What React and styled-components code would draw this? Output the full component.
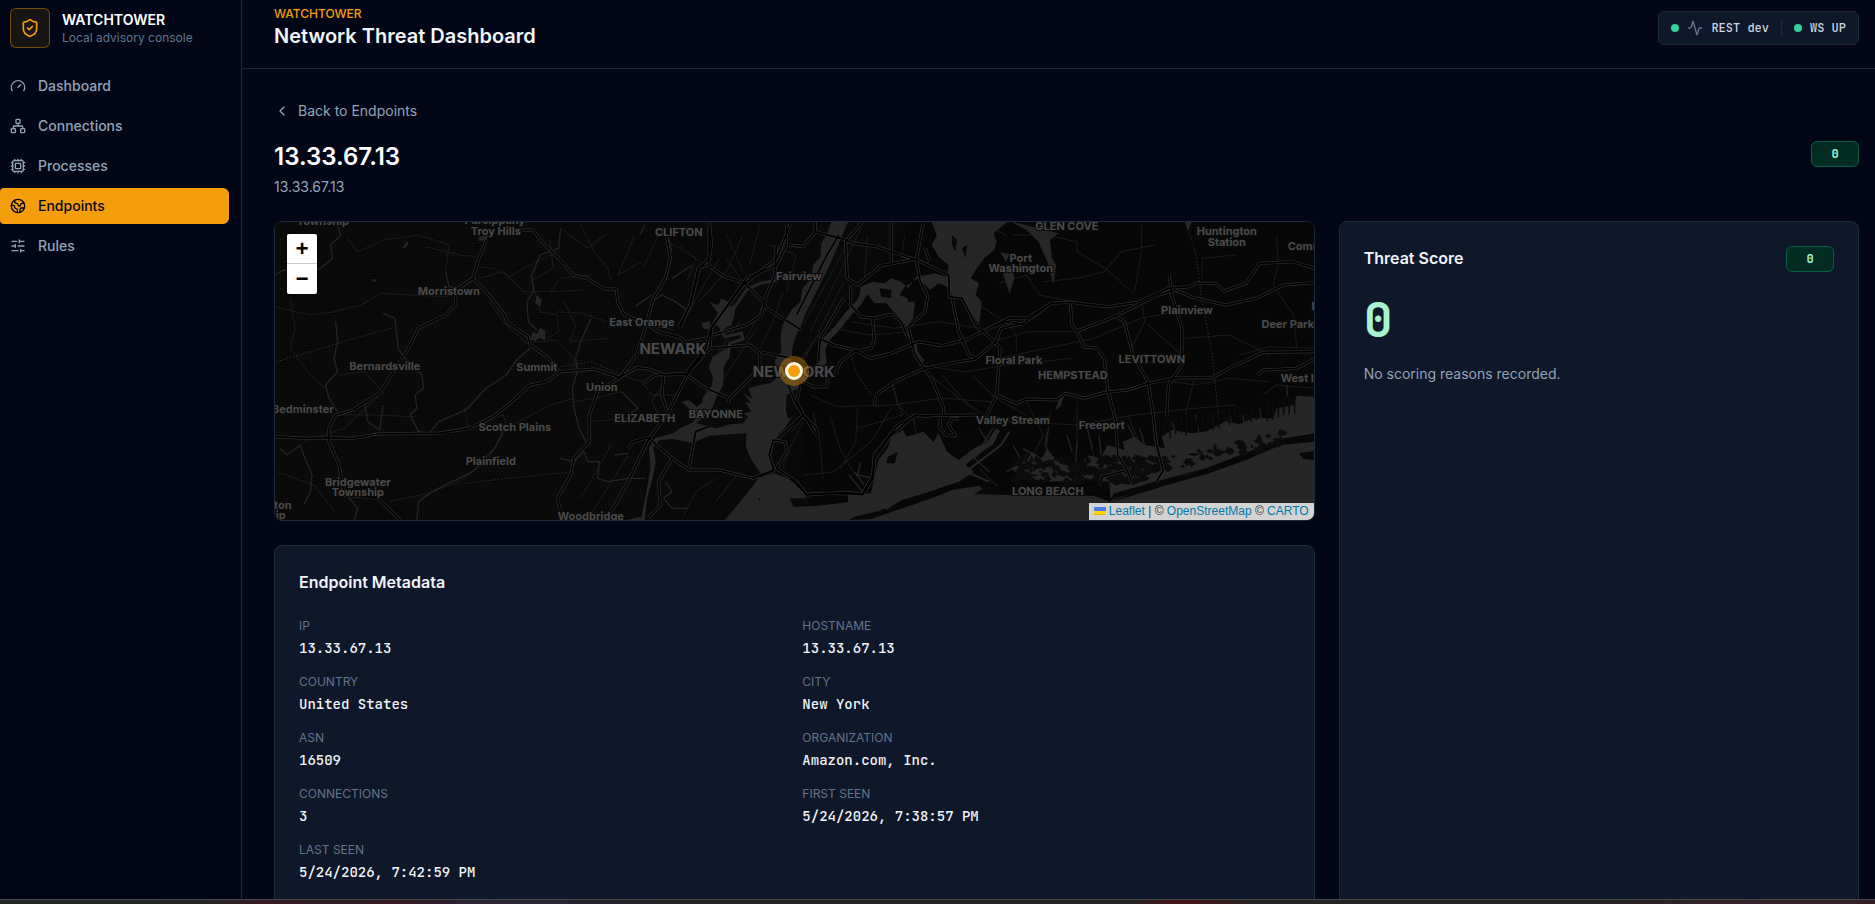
import React from 'react';
import styled, {createGlobalStyle} from 'styled-components';
import {
    Activity,
    ChevronLeft,
    Cpu,
    Earth,
    Gauge,
    Network,
    ShieldCheck,
    SlidersHorizontal,
} from 'lucide-react';

const sans = '"Inter", "Liberation Sans", sans-serif';
const mono = '"JetBrains Mono", "DejaVu Sans Mono", monospace';

const GlobalStyle = createGlobalStyle`
    * {
        box-sizing: border-box;
    }

    body {
        margin: 0;
        background: #020617;
        color: #f1f5f9;
        font-family: ${sans};
        font-size: 14px;
        line-height: 20px;
    }

    h1, h2, p, dl, dd, ul {
        margin: 0;
        padding: 0;
    }

    a {
        color: inherit;
        text-decoration: none;
    }
`;

const Shell = styled.div`
    display: flex;
    height: 100vh;
    overflow: hidden;
`;

const Sidebar = styled.aside`
    width: 242px;
    flex-shrink: 0;
    padding: 8px 12px 0 0;
    border-right: 1px solid #1e293b;
`;

const Brand = styled.div`
    display: flex;
    align-items: center;
    gap: 12px;
    padding-left: 10px;
`;

const BrandMark = styled.div`
    display: flex;
    align-items: center;
    justify-content: center;
    width: 40px;
    height: 40px;
    border: 1px solid rgba(245, 158, 11, 0.4);
    border-radius: 6px;
    background: rgba(245, 158, 11, 0.1);
    color: #f59e0b;
`;

const BrandName = styled.p`
    font-weight: 600;
    line-height: 20px;
    color: #fff;
`;

const BrandNote = styled.p`
    font-size: 12px;
    line-height: 16px;
    color: #64748b;
`;

const NavList = styled.ul`
    display: grid;
    gap: 4px;
    margin-top: 20px;
    list-style: none;
`;

const NavLink = styled.a`
    display: flex;
    align-items: center;
    gap: 12px;
    height: 36px;
    padding-left: 10px;
    border-radius: 4px 6px 6px 4px;
    font-weight: 500;
    background: ${(props) => (props.$active ? '#f59e0b' : 'transparent')};
    color: ${(props) => (props.$active ? '#020617' : '#94a3b8')};
`;

const Page = styled.div`
    flex: 1;
    min-width: 0;
`;

const TopBar = styled.header`
    display: flex;
    align-items: center;
    justify-content: space-between;
    padding: 6px 16px 18px 32px;
    border-bottom: 1px solid #1e293b;
`;

const Eyebrow = styled.p`
    font-size: 12px;
    line-height: 16px;
    font-weight: 500;
    color: #f59e0b;
`;

const AppTitle = styled.p`
    font-size: 20px;
    line-height: 28px;
    font-weight: 600;
    color: #f1f5f9;
`;

const StatusPill = styled.div`
    display: flex;
    align-items: center;
    gap: 8px;
    padding: 8px 12px;
    border: 1px solid #1e293b;
    border-radius: 6px;
    background: #0f172a;
    color: #cbd5e1;
    font-family: ${mono};
    font-size: 12px;
    font-weight: 500;
    line-height: 16px;

    svg {
        color: #64748b;
    }
`;

const Dot = styled.span`
    width: 8px;
    height: 8px;
    border-radius: 50%;
    background: #34d399;
`;

const Divider = styled.span`
    width: 1px;
    height: 16px;
    margin: 0 4px;
    background: #1e293b;
`;

const Main = styled.main`
    display: grid;
    gap: 20px;
    padding: 32px 16px 32px 32px;
`;

const BackLink = styled.a`
    display: flex;
    align-items: center;
    gap: 8px;
    justify-self: start;
    color: #94a3b8;
`;

const EndpointHead = styled.div`
    display: flex;
    align-items: flex-start;
    justify-content: space-between;
    margin-bottom: 4px;
`;

const EndpointTitle = styled.h1`
    margin-bottom: 4px;
    font-size: 24px;
    line-height: 32px;
    font-weight: 600;
    color: #fff;
`;

const Muted = styled.p`
    color: #94a3b8;
`;

const Badge = styled.span`
    display: inline-flex;
    align-items: center;
    justify-content: center;
    min-width: 48px;
    height: 26px;
    border: 1px solid #065f46;
    border-radius: 6px;
    background: #022c22;
    color: #a7f3d0;
    font-family: ${mono};
    font-size: 12px;
    font-weight: 600;
`;

const Columns = styled.div`
    display: grid;
    grid-template-columns: minmax(0, 2fr) minmax(0, 1fr);
    gap: 24px;
`;

const Stack = styled.div`
    display: grid;
    gap: 24px;
`;

const Card = styled.section`
    padding: 24px;
    border: 1px solid #1e293b;
    border-radius: 8px;
    background: #0f172a;
`;

const CardHead = styled.div`
    display: flex;
    align-items: flex-start;
    justify-content: space-between;
    margin-bottom: 24px;
`;

const CardTitle = styled.h2`
    font-size: 16px;
    line-height: 24px;
    font-weight: 600;
    color: #f1f5f9;
`;

const Score = styled.p`
    margin-bottom: 20px;
    font-family: ${mono};
    font-size: 48px;
    line-height: 48px;
    font-weight: 600;
    color: #a7f3d0;
`;

const MetaGrid = styled.dl`
    display: grid;
    grid-template-columns: 1fr 1fr;
    gap: 16px;
`;

const MetaLabel = styled.dt`
    margin-bottom: 4px;
    font-size: 12px;
    line-height: 16px;
    text-transform: uppercase;
    color: #64748b;
`;

const MetaValue = styled.dd`
    font-family: ${mono};
    font-size: 14px;
    font-weight: 500;
    line-height: 20px;
    color: #f1f5f9;
`;

const MapFrame = styled.section`
    position: relative;
    height: 300px;
    border: 1px solid #1e293b;
    border-radius: 8px;
    overflow: hidden;
    background: #090909;
`;

const MapCanvas = styled.svg`
    display: block;
    width: 100%;
    height: 100%;
`;

const ZoomControl = styled.div`
    position: absolute;
    top: 10px;
    left: 10px;
    border: 2px solid rgba(0, 0, 0, 0.2);
    border-radius: 4px;
    background-clip: padding-box;
`;

const ZoomButton = styled.button`
    display: block;
    width: 30px;
    height: 30px;
    padding: 4px 0 0;
    border: 0;
    background: #fff;
    color: #000;
    font: bold 22px/26px "Liberation Mono", monospace;

    &:first-child {
        border-bottom: 1px solid #ccc;
        border-radius: 2px 2px 0 0;
    }

    &:last-child {
        border-radius: 0 0 2px 2px;
    }
`;

const Marker = styled.span`
    position: absolute;
    top: 50%;
    left: 50%;
    width: 18px;
    height: 18px;
    margin: -9px 0 0 -9px;
    border: 3px solid #fff7e0;
    border-radius: 50%;
    background: #f59e0b;
    box-shadow: 0 0 0 6px rgba(245, 158, 11, 0.35);
`;

const Attribution = styled.div`
    position: absolute;
    right: 0;
    bottom: 0;
    padding: 0 5px;
    background: rgba(255, 255, 255, 0.8);
    color: #333;
    font-family: "Liberation Sans", Arial, sans-serif;
    font-size: 12px;
    line-height: 17px;

    a {
        color: #0078a8;
    }
`;

const DesktopEdge = styled.div`
    position: fixed;
    left: 0;
    right: 0;
    bottom: 0;
    height: 5px;
    border-top: 1px solid #4a4a4e;
    background: linear-gradient(
        90deg,
        #252726 0%,
        #262626 11%,
        #3a1a23 14%,
        #2e2025 18%,
        #3a1a23 21%,
        #2a2333 25%,
        #272430 31%,
        #242424 36%,
        #252525 60%,
        #4a1418 63%,
        #262526 67%,
        #252525 84%,
        #35202a 94%,
        #35202a 100%
    );
`;

const navItems = [
    {label: 'Dashboard', icon: Gauge},
    {label: 'Connections', icon: Network},
    {label: 'Processes', icon: Cpu},
    {label: 'Endpoints', icon: Earth, active: true},
    {label: 'Rules', icon: SlidersHorizontal},
];

const metadata = [
    ['IP', '13.33.67.13'],
    ['Hostname', '13.33.67.13'],
    ['Country', 'United States'],
    ['City', 'New York'],
    ['ASN', '16509'],
    ['Organization', 'Amazon.com, Inc.'],
    ['Connections', '3'],
    ['First Seen', '5/24/2026, 7:38:57 PM'],
    ['Last Seen', '5/24/2026, 7:42:59 PM'],
];

// each tile keeps its own local coordinates, three units to a map pixel
const WEST = 'translate(-5 -7) scale(0.338 0.3333)';
const HARBOR = 'translate(255 -7) scale(0.3333)';
const EAST = 'translate(515 -7) scale(0.338 0.3333)';

const water = [
    [HARBOR, 'M905 20 L955 20 L925 90 L900 150 L880 190 L850 250 L830 290 L812 335 L795 370 L788 400 L785 450 L812 480 L805 520 L770 540 L768 590 L790 600 L765 640 L745 660 L730 690 L722 735 L732 765 L692 775 L665 735 L648 695 L650 655 L600 658 L540 662 L485 684 L430 672 L390 675 L370 695 L378 740 L368 790 L352 850 L345 915 L290 915 L335 905 L350 830 L362 760 L357 700 L375 670 L430 655 L450 640 L490 622 L500 600 L455 560 L480 555 L510 570 L520 545 L545 515 L550 490 L538 460 L548 425 L590 400 L600 425 L582 455 L580 510 L560 545 L545 585 L500 625 L560 640 L600 628 L640 625 L655 605 L640 595 L665 590 L645 560 L665 565 L640 535 L668 552 L655 520 L690 510 L720 505 L740 490 L735 435 L755 410 L752 370 L758 330 L785 285 L812 260 L818 220 L845 190 L850 150 L872 125 L875 85 L890 60 Z'],
    [HARBOR, 'M540 262 L565 270 L575 250 L595 262 L590 280 L612 270 L615 300 L605 330 L575 345 L550 320 L565 295 Z M515 325 L540 318 L540 345 L520 340 Z'],
    [HARBOR, 'M585 915 L640 850 L690 785 L735 775 L800 800 L830 850 L780 850 L790 875 L870 872 L955 862 L955 838 L1030 835 L1030 880 L1060 885 L960 908 L955 915 Z'],
    [EAST, 'M420 20 L645 20 L603 55 L612 80 L605 105 L575 130 L550 165 L535 190 L560 205 L550 240 L568 260 L560 330 L535 290 L505 250 L480 240 L465 215 L440 205 L415 225 L380 190 L340 215 L325 240 L370 260 L365 310 L345 335 L325 310 L285 265 L250 265 L232 240 L205 245 L210 215 L245 200 L280 205 L300 190 L330 200 L350 220 L375 185 L430 175 L465 185 L470 150 L440 125 L420 90 L435 60 Z'],
    [EAST, 'M655 20 L795 55 L770 75 L775 130 L788 150 L780 208 L762 140 L735 80 L700 45 Z M1168 20 L1190 20 L1178 48 Z M625 160 L642 150 L660 165 L664 190 L650 238 L640 205 Z M622 112 L650 118 L640 140 Z'],
    [EAST, 'M335 645 L345 665 L395 650 L425 680 L440 655 L465 710 L500 735 L545 700 L585 680 L610 640 L622 648 L600 690 L560 715 L520 750 L545 770 L500 800 L455 815 L400 835 L330 855 L285 885 L240 835 L250 790 L262 735 L290 700 L300 665 Z'],
    [EAST, 'M0 915 V880 L40 878 L172 862 L175 838 L245 838 L285 880 L200 900 L175 915 L240 912 L420 850 L480 825 L560 812 L590 838 L700 842 L900 842 L950 862 L1100 815 L1240 775 L1350 735 L1450 690 L1552 680 V915 Z'],
    [EAST, 'M1552 545 L1500 542 L1490 570 L1440 580 L1430 610 L1370 610 L1330 628 L1290 618 L1235 648 L1190 655 L1130 645 L1100 665 L1110 700 L1050 690 L1020 665 L985 680 L990 705 L940 690 L920 730 L880 720 L860 750 L845 760 L800 745 L760 705 L745 730 L715 710 L700 740 L655 760 L690 790 L760 800 L900 795 L945 800 L950 862 L1000 840 L1060 805 L1180 780 L1320 725 L1450 672 L1552 655 Z'],
    [EAST, 'M815 530 L800 575 L785 585 L800 545 Z'],
    [WEST, 'M790 240 L805 255 L800 275 L785 265 Z M778 350 L790 358 L800 338 L815 348 L815 375 L798 368 L785 378 L770 375 Z M618 65 L650 60 L640 75 L618 78 Z M392 98 L405 80 L412 84 L400 98 Z M298 195 L315 193 L312 202 Z'],
];

const rivers = [
    [HARBOR, 'M595 420 L600 385 L640 372 L635 355 L585 365 L575 345 L600 320 L612 280 L650 225 L690 205 L745 195', 9],
    [EAST, 'M225 225 L205 262 L170 300 L140 340 L110 370 L95 400 L100 440 L70 470 L40 490 L10 505', 18],
    [EAST, 'M370 380 L375 410 L395 440', 7],
    [EAST, 'M1550 690 L1500 690 M650 650 L625 690 L560 740 L520 770 L590 800', 6],
    [EAST, 'M390 660 L405 720 L415 770 L425 820', 8],
];

// dry ground that sits inside the water shapes
const islands = [
    [EAST, 'M265 220 L300 225 L300 250 L270 245 Z M345 235 L375 230 L385 255 L350 262 Z M480 60 L495 75 L490 110 L480 90 Z M510 100 L525 90 L520 130 Z M290 725 L320 710 L310 745 L285 745 Z M460 690 L540 650 L560 690 L515 720 Z M545 838 L580 815 L940 812 L935 835 L700 838 Z M945 858 L960 835 L1120 790 L1320 735 L1460 690 L1400 705 L1100 805 Z M1505 715 L1550 708 V735 L1520 732 Z'],
    [HARBOR, 'M770 590 L785 588 L792 600 L775 612 Z M450 505 L500 545 L520 560 L500 575 L440 520 Z M685 850 L692 850 L690 858 Z'],
];

const minorRoads = [
    [WEST, 'M15 275 L120 300 L190 290 L270 270 L330 235 L420 240 L520 245 L600 200 M60 250 L75 340 L60 400 L120 480 L175 530 M230 70 L260 110 L340 75 L440 60 L530 90 L520 170 M460 95 L560 120 L610 125 M615 155 L660 160 L710 185 L760 155 L850 110 M620 190 L690 170 L750 230 L830 230 L930 225 M650 260 L690 320 L760 385 L850 375 L900 430 L900 480'],
    [WEST, 'M780 210 L800 290 L850 300 L855 350 L820 370 M850 290 L920 295 L1000 320 M870 260 L905 330 L890 380 L1000 370 M860 40 L940 100 L990 60 M920 30 L960 110 L1000 160 L1010 200 M830 230 L860 190 L950 180 M200 480 L280 470 L340 540 M180 600 L310 600 L430 605 M100 680 L220 640 L320 545 M690 660 L640 740 L560 800 L470 835 L350 860 M900 560 L960 550 L1040 530 M950 620 L1060 610 M700 640 L830 570 L900 550 M20 770 L130 810 L200 900'],
    [WEST, 'M1040 290 L1110 330 L1200 345 M1080 60 L1030 180 L1100 140 M1330 130 L1290 200 L1240 290 L1210 340 M1350 130 L1400 200 M1400 60 L1350 170 L1270 260 M1440 340 L1350 480 L1290 530 M1390 320 L1300 450 M1320 790 L1260 830 L1220 910 M1390 770 L1320 860 M940 915 L1060 720 M1010 690 L920 850 M1170 500 L1130 560 L1150 600'],
    [EAST, 'M560 20 L640 60 M660 60 L760 60 L850 80 L850 110 L940 165 L1020 240 M1040 30 L1040 110 L1020 230 M930 170 L980 110 L1080 90 M750 200 L850 190 L930 170 M620 205 L700 180 L740 240 L840 260 M1220 190 L1220 130 L1320 120 M1440 60 L1445 150 L1430 210 L1490 300 L1500 400'],
    [EAST, 'M600 380 L700 350 L840 350 M620 430 L760 400 L900 370 L1040 310 L1140 290 M640 320 L670 360 L670 410 M1040 250 L1050 320 L1010 400 L1050 490 M1060 330 L1170 430 M1170 370 L1300 360 L1420 420 M540 480 L610 550 L700 600 M380 450 L520 470 L640 450 L840 430 M400 470 L540 580 M180 320 L310 340 L440 320 L560 340 M120 340 L240 360 L360 350 M60 540 L140 575 L300 570 L450 550 L600 560'],
    [EAST, 'M200 580 L195 680 L150 760 M300 580 L240 680 L130 770 L40 780 M300 500 L320 570 L370 620 M360 590 L380 680 M450 480 L520 560 L600 620 M640 620 L850 630 L1020 600 L1200 580 L1320 570 M700 560 L750 660 L720 720 M770 590 L760 700 M850 560 L850 700 M880 640 L900 730 M1000 600 L1040 700 M1130 500 L1200 510 L1300 490 L1420 500 M1400 540 L1440 510 L1552 520 M1200 480 L1170 600'],
    [EAST, 'M20 330 L150 60 M40 330 L190 50 M60 350 L120 230 L210 40 M85 350 L160 200 M20 480 L70 380 M30 440 L90 350 M230 60 L220 200 M340 60 L330 130 M560 760 L620 820 M1552 400 L1420 395 L1330 420'],
    [HARBOR, 'M60 70 L70 160 L0 200 M400 30 L340 160 M450 90 L500 130 L470 200 M590 60 L640 170 M690 30 L660 150 M720 90 L800 120 L770 230 M700 270 L650 370 M760 230 L730 320 L690 400 M850 590 L870 680 L880 790 M900 600 L930 700 L970 770 M820 620 L780 700 L760 760'],
];

const streams = [
    [WEST, 'M200 30 L210 60 L180 90 L185 130 L150 160 L100 175 L40 165 L15 180 M335 295 L370 310 L380 400 L400 430 L450 480 L455 520 L430 540 L435 580 L415 600 L440 650 L470 655 L500 620 L580 585 L640 520 L700 480 L730 435 L770 400 M195 320 L200 380 L190 430 L200 470 L165 510 L175 550 L200 590'],
    [WEST, 'M280 560 L290 620 L325 645 L335 570 M860 40 L855 100 L800 120 L775 180 L780 230 L760 260 L765 320 L790 345 M950 310 L920 380 L905 430 L910 470 L895 520 L900 580 L915 640 L935 680 M30 700 L50 720 L90 690 L100 720 L125 780 L120 830 L100 870 M220 830 L260 880 L250 915 M435 915 L440 860 L480 830 L540 800 L600 770 L665 700 L690 650'],
    [WEST, 'M860 730 L900 740 L930 710 L940 740 L975 740 L970 790 L1000 800 L1060 790 L1110 790 M520 170 L530 215 L560 225 M1110 30 L1095 60 M1130 240 L1080 275 M1130 260 L1160 240 L1200 260 L1240 290 M1180 70 L1190 110 M1190 190 L1250 150 M1020 720 L1060 715 M1170 800 L1190 830 L1165 850 L1190 880 L1235 880 M1060 600 L1090 580 L1040 530'],
    [EAST, 'M175 780 L215 830 M190 770 L220 810 M210 740 L200 780 L250 790 M560 640 L590 690 L545 730 L590 770 M600 640 L570 690 M1470 510 L1472 545 M1130 620 L1140 650 M1200 600 L1210 650 M1250 600 L1255 640 M1300 590 L1305 620 M1340 600 L1345 625 M1390 580 L1395 610 M700 720 L680 770 L720 800 M740 730 L735 790 M770 710 L770 790 M640 770 L700 740'],
    [EAST, 'M765 640 L755 690 L770 720 M820 660 L835 710 M880 640 L895 700 M915 660 L920 720 M1000 630 L1020 670 M1035 640 L1050 690 M690 700 L715 715 M850 680 L845 750 M660 690 L690 745'],
];

const highways = [
    [WEST, 'M15 665 L100 670 L170 668 L245 670 L320 657 L440 655 L500 655 L590 640 L660 605 L710 565 L770 510 L820 500 L860 470 L960 462 L1035 488 L1085 458 L1120 462 L1170 480 L1230 478 L1290 520 L1350 545'],
    [WEST, 'M640 75 L620 125 L600 190 L550 225 L550 270 L520 300 L440 340 L410 400 L360 480 L325 535 L245 585 L195 600 L175 640 L175 680 L205 750 L220 840 L320 850 L385 915'],
    [WEST, 'M740 45 L780 45 L800 75 L870 145 L895 180 L940 190 L990 222 L1025 222 L1030 265 L1050 300 L1110 325 L1150 350 L1215 368 L1230 382 L1290 370'],
    [WEST, 'M600 190 L640 230 L695 300 L700 320 L765 365 L770 390 L820 425 L855 468'],
    [WEST, 'M860 885 L850 850 L890 780 L900 730 L945 680 L945 600 L970 530 L1035 488 L1085 420 L1110 340 L1135 250 L1170 190 L1185 130 L1175 70'],
    [WEST, 'M1010 890 L1060 800 L1120 675 L1180 590 L1235 480 L1290 400 L1305 340 L1400 210 L1500 130 L1540 25'],
    [WEST, 'M1120 910 L1155 870 L1150 800 L1190 730 L1240 765 L1330 765 L1430 790 L1490 765'],
    [WEST, 'M1060 700 L1075 680 L1120 668 L1190 730 M1300 20 L1300 130 L1270 160 L1245 270 L1210 335 M1305 400 L1420 390 L1450 415 L1450 460 L1360 550 L1355 565 M1165 480 L1160 540 L1175 590 M1240 760 L1260 650 L1305 632 M1105 505 L1140 480 L1230 475 L1290 400'],
    [HARBOR, 'M540 30 L545 90 L535 150 L585 185 L645 205 L700 260 L710 280 L815 345 M530 150 L505 160 L480 270 L450 340 M770 30 L770 90 L740 150 L650 190 L545 340 L540 400 L470 480 M740 90 L735 180 L710 240 L695 300 L650 330 L600 345 L550 360'],
    [HARBOR, 'M732 765 L718 720 L730 675 L765 680 L772 710 L740 760 L800 800 L830 840 L950 832 L1000 838 L1030 790 L1035 730 L1080 665 L1155 600 L1200 605 M690 785 L735 765 M745 670 L820 600 L860 640 L865 665 M775 510 L795 560 L820 600 M820 500 L850 515 L890 515 L895 490 M695 412 L790 430'],
    [EAST, 'M75 20 L75 50 L40 95 L0 90 M75 50 L150 70 L190 85 L260 95 L300 110 L375 135 L420 155 L470 180 L472 245 L510 250 L550 330 L605 380 L622 400 L612 540 L670 565 L700 552 L790 555 L815 535 L870 550 L935 532 L1000 525 L1060 505 L1150 488 L1250 488 L1290 465 L1400 412 L1552 410'],
    [EAST, 'M215 20 L165 80 L170 190 L200 210 L270 152 L375 132 L395 20 M300 20 L300 150 M400 100 L415 140 M375 140 L385 195 L408 245 L400 290 L350 335 L370 420 L420 490 L455 580 L455 600 M180 210 L180 270 L210 305 L250 310 L300 298 L330 320 L350 370'],
    [EAST, 'M20 300 L110 120 L145 60 M160 250 L90 370 L85 440 M90 372 L130 390 L190 405 L240 430 L300 415 L380 380 L450 392 L520 375 L600 335 L650 308 L700 310 L775 265 L830 262 L940 275 L1030 262 L1120 220 L1180 215 L1200 205 L1260 205 L1285 228 L1350 205 L1390 145 L1490 140 L1552 160'],
    [EAST, 'M250 570 L255 540 L310 500 L400 460 L500 440 L550 432 L610 380 L625 340 L690 325 L740 290 L775 262 M245 310 L250 375 L240 400 L190 410 L150 440 L135 475 M480 250 L500 350 L530 420 L555 432 M555 600 L375 602 L320 630 L250 720 L245 780 L215 838 L100 835 L50 838 L0 790'],
    [EAST, 'M830 265 L835 330 L850 350 L870 395 L910 400 L930 430 L940 520 L965 620 L970 720 L1000 770 L1012 805 M850 348 L950 310 L1040 265 L1090 240 L1140 225 L1200 250 L1290 270 L1380 250 L1460 210 L1552 203 M960 300 L990 320 L1015 420 L1060 500 L1075 600 L1085 690 L1105 765 L1085 800'],
    [EAST, 'M1122 180 L1130 240 L1160 340 L1160 450 L1120 510 L1115 605 M1385 480 L1400 465 L1500 460 L1552 432 M915 812 L925 785 L990 768 M445 610 L445 640 L465 662 L490 662 L470 630 L480 610 L500 612 M600 335 L640 320 L690 328 M610 545 L580 605 M30 510 L20 560 L40 600 L80 660 M40 600 L0 650'],
];

const boundaries = [
    [WEST, 'M20 440 L120 410 L250 370 L365 338 M575 805 L700 790 L880 772 M860 455 L950 440 L1040 480 L1100 500 L1130 540 L1210 540 M1180 80 L1290 150 M575 580 L590 640 L690 600 L700 630'],
    [EAST, 'M1180 50 L1200 110 L1220 260 L1250 420 L1268 600 M180 420 L200 480 L240 540 M305 500 L320 570 L335 600 L200 640 M560 270 L640 320'],
];

const labels = [
    ['Township', 48, -1, 11],
    ['Parsippany', 220, -2, 11],
    ['Troy Hills', 221, 9, 11],
    ['CLIFTON', 404, 10, 11],
    ['Morristown', 174, 69, 11],
    ['East Orange', 367, 100, 11],
    ['NEWARK', 398, 127, 15],
    ['Bernardsville', 110, 144, 11],
    ['Summit', 262, 145, 11],
    ['Union', 327, 165, 11],
    ['ELIZABETH', 370, 196, 11],
    ['BAYONNE', 441, 192, 11],
    ['Bedminster', 28, 187, 11],
    ['Scotch Plains', 240, 205, 11],
    ['Plainfield', 216, 239, 11],
    ['Bridgewater', 83, 260, 11],
    ['Township', 83, 270, 11],
    ['ton', 8, 283, 11],
    ['ip', 6, 293, 11],
    ['Woodbridge', 316, 294, 11],
    ['Fairview', 524, 54, 11],
    ['NEW YORK', 519, 150, 15],
    ['GLEN COVE', 792, 4, 11],
    ['Huntington', 952, 9, 11],
    ['Station', 952, 20, 11],
    ['Commack', 1040, 24, 11],
    ['Port', 746, 36, 11],
    ['Washington', 746, 46, 11],
    ['Plainview', 912, 88, 11],
    ['Edgewood', 1065, 84, 11],
    ['Deer Park', 1013, 102, 11],
    ['Floral Park', 739, 138, 11],
    ['HEMPSTEAD', 798, 153, 11],
    ['LEVITTOWN', 877, 137, 11],
    ['West Islip', 1032, 156, 11],
    ['Valley Stream', 738, 198, 11],
    ['Freeport', 827, 203, 11],
    ['LONG BEACH', 773, 269, 11],
];

// small marsh islands along the south shore bays
function marshPath() {
    let seed = 7;
    const rand = () => {
        seed = (seed * 16807) % 2147483647;
        return seed / 2147483647;
    };
    let d = '';
    for (let i = 0; i < 260; i++) {
        const x = 660 + rand() * (i % 3 ? 440 : 830);
        const shore = x < 1050 ? 730 : 735 - (x - 1050) * 0.2;
        const y = shore + rand() * (x < 1050 ? 75 : 45);
        const w = 8 + rand() * 26;
        const h = 4 + rand() * 12;
        d += `M${x - w / 2} ${y} l${w * 0.4} ${-h} l${w * 0.4} ${h * 0.3} l${w * 0.3} ${h * 0.7} l${-w * 0.5} ${h * 0.7} Z `;
    }
    for (let i = 0; i < 26; i++) {
        const x = 1090 + i * 16;
        const y = 658 - i * 3;
        d += `M${x} ${y - 40} h7 l-2 ${40 + rand() * 22} h-4 Z `;
    }
    return d;
}

const marsh = marshPath();

const Lines = ({items, color, width, dash}) => (
    <g fill="none" stroke={color} strokeWidth={width} strokeDasharray={dash} strokeLinejoin="round">
        {items.map(([tile, d]) => (
            <path key={d} d={d} transform={tile} />
        ))}
    </g>
);

function EndpointMap() {
    return (
        <MapFrame aria-label="Endpoint location">
            <MapCanvas viewBox="0 0 1039 298" preserveAspectRatio="xMidYMid slice">
                <defs>
                    <pattern id="woods" width="3" height="3" patternUnits="userSpaceOnUse">
                        <rect width="1" height="1" fill="#101010" />
                    </pattern>
                </defs>
                <rect width="1039" height="298" fill="#090909" />
                <rect width="360" height="298" fill="url(#woods)" />
                <path d="M540 298 L520 150 L640 0 H1039 V298 Z" fill="#070707" />
                <Lines items={minorRoads} color="#1b1b1b" width={3} />
                <Lines items={streams} color="#242424" width={4} />
                {water.map(([tile, d]) => (
                    <path key={d} d={d} transform={tile} fill="#262626" />
                ))}
                {rivers.map(([tile, d, width]) => (
                    <path key={d} d={d} transform={tile} fill="none" stroke="#262626" strokeWidth={width} />
                ))}
                {islands.map(([tile, d]) => (
                    <path key={d} d={d} transform={tile} fill="#080808" />
                ))}
                <path d={marsh} transform={EAST} fill="#0b0b0b" />
                <Lines items={boundaries} color="#2a2a2a" width={3} dash="5 5" />
                <Lines items={highways} color="#303030" width={9} />
                <Lines items={highways} color="#000" width={5} />
                <g
                    fill="#4a4a4a"
                    stroke="#0b0b0b"
                    strokeWidth="2"
                    paintOrder="stroke"
                    fontFamily="Inter, sans-serif"
                    fontWeight="700"
                    textAnchor="middle"
                >
                    {labels.map(([name, x, y, size]) => (
                        <text key={name + y} x={x} y={y + size * 0.36} fontSize={size}>{name}</text>
                    ))}
                </g>
            </MapCanvas>
            <Marker />
            <ZoomControl>
                <ZoomButton type="button" aria-label="Zoom in">+</ZoomButton>
                <ZoomButton type="button" aria-label="Zoom out">−</ZoomButton>
            </ZoomControl>
            <Attribution>
                <a href="#leaflet">
                    <svg width="12" height="8" viewBox="0 0 12 8" aria-hidden="true">
                        <path fill="#4c7be1" d="M0 0h12v4H0z" />
                        <path fill="#ffd500" d="M0 4h12v3H0z" />
                        <path fill="#e0bc00" d="M0 7h12v1H0z" />
                    </svg>
                    {' '}Leaflet
                </a>
                {' | © '}
                <a href="#osm">OpenStreetMap</a>
                {' © '}
                <a href="#carto">CARTO</a>
            </Attribution>
        </MapFrame>
    );
}

function Navigation() {
    return (
        <Sidebar>
            <Brand>
                <BrandMark><ShieldCheck size={20} /></BrandMark>
                <div>
                    <BrandName>WATCHTOWER</BrandName>
                    <BrandNote>Local advisory console</BrandNote>
                </div>
            </Brand>
            <nav>
                <NavList>
                    {navItems.map(({label, icon: Icon, active}) => (
                        <li key={label}>
                            <NavLink href={`#${label.toLowerCase()}`} $active={active}>
                                <Icon size={16} />
                                {label}
                            </NavLink>
                        </li>
                    ))}
                </NavList>
            </nav>
        </Sidebar>
    );
}

function App() {
    return (
        <Shell>
            <GlobalStyle />
            <Navigation />
            <Page>
                <TopBar>
                    <div>
                        <Eyebrow>WATCHTOWER</Eyebrow>
                        <AppTitle>Network Threat Dashboard</AppTitle>
                    </div>
                    <StatusPill>
                        <Dot />
                        <Activity size={16} />
                        <span>REST dev</span>
                        <Divider />
                        <Dot />
                        <span>WS UP</span>
                    </StatusPill>
                </TopBar>
                <Main>
                    <BackLink href="#endpoints">
                        <ChevronLeft size={16} />
                        Back to Endpoints
                    </BackLink>
                    <EndpointHead>
                        <div>
                            <EndpointTitle>13.33.67.13</EndpointTitle>
                            <Muted>13.33.67.13</Muted>
                        </div>
                        <Badge>0</Badge>
                    </EndpointHead>
                    <Columns>
                        <Stack>
                            <EndpointMap />
                            <Card>
                                <CardHead><CardTitle>Endpoint Metadata</CardTitle></CardHead>
                                <MetaGrid>
                                    {metadata.map(([label, value]) => (
                                        <div key={label}>
                                            <MetaLabel>{label}</MetaLabel>
                                            <MetaValue>{value}</MetaValue>
                                        </div>
                                    ))}
                                </MetaGrid>
                            </Card>
                        </Stack>
                        <Card>
                            <CardHead>
                                <CardTitle>Threat Score</CardTitle>
                                <Badge>0</Badge>
                            </CardHead>
                            <Score>0</Score>
                            <Muted>No scoring reasons recorded.</Muted>
                        </Card>
                    </Columns>
                </Main>
            </Page>
            <DesktopEdge />
        </Shell>
    );
}

export default App;
